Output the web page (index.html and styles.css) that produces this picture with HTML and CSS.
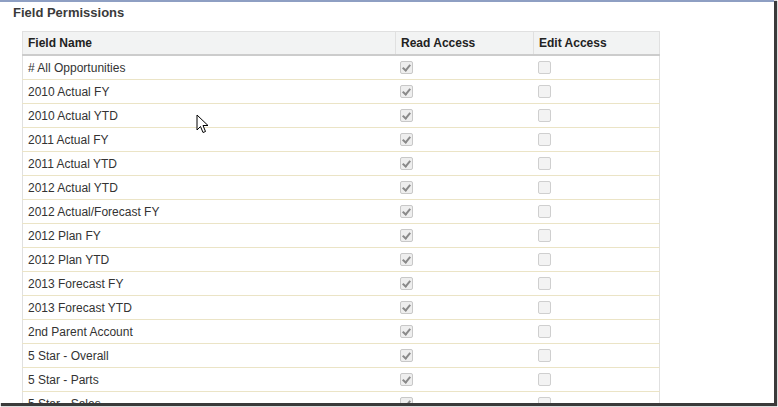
FILE: index.html
```html
<!DOCTYPE html>
<html>
<head>
<meta charset="utf-8">
<link rel="stylesheet" href="styles.css">
</head>
<body>
<div class="frame">
  <h2 class="title">Field Permissions</h2>
  <table class="perm">
    <colgroup><col class="c1"><col class="c2"><col class="c3"></colgroup>
    <thead>
      <tr><th>Field Name</th><th>Read Access</th><th>Edit Access</th></tr>
    </thead>
    <tbody>
      <tr><td># All Opportunities</td><td><span class="cb on"></span></td><td><span class="cb"></span></td></tr>
      <tr><td>2010 Actual FY</td><td><span class="cb on"></span></td><td><span class="cb"></span></td></tr>
      <tr><td>2010 Actual YTD</td><td><span class="cb on"></span></td><td><span class="cb"></span></td></tr>
      <tr><td>2011 Actual FY</td><td><span class="cb on"></span></td><td><span class="cb"></span></td></tr>
      <tr><td>2011 Actual YTD</td><td><span class="cb on"></span></td><td><span class="cb"></span></td></tr>
      <tr><td>2012 Actual YTD</td><td><span class="cb on"></span></td><td><span class="cb"></span></td></tr>
      <tr><td>2012 Actual/Forecast FY</td><td><span class="cb on"></span></td><td><span class="cb"></span></td></tr>
      <tr><td>2012 Plan FY</td><td><span class="cb on"></span></td><td><span class="cb"></span></td></tr>
      <tr><td>2012 Plan YTD</td><td><span class="cb on"></span></td><td><span class="cb"></span></td></tr>
      <tr><td>2013 Forecast FY</td><td><span class="cb on"></span></td><td><span class="cb"></span></td></tr>
      <tr><td>2013 Forecast YTD</td><td><span class="cb on"></span></td><td><span class="cb"></span></td></tr>
      <tr><td>2nd Parent Account</td><td><span class="cb on"></span></td><td><span class="cb"></span></td></tr>
      <tr><td>5 Star - Overall</td><td><span class="cb on"></span></td><td><span class="cb"></span></td></tr>
      <tr><td>5 Star - Parts</td><td><span class="cb on"></span></td><td><span class="cb"></span></td></tr>
      <tr><td>5 Star - Sales</td><td><span class="cb on"></span></td><td><span class="cb"></span></td></tr>
    </tbody>
  </table>
  <svg class="cursor" width="14" height="21" viewBox="0 0 14 21">
    <path d="M1 1 L1 16 L4.5 12.5 L7 18.5 L9.5 17.5 L7 11.5 L12 11.5 Z" fill="#fff" stroke="#000" stroke-width="1" stroke-linejoin="miter"/>
  </svg>
</div>
</body>
</html>
```

FILE: styles.css
```css
html, body {
  margin: 0;
  padding: 0;
  background: #ffffff;
}
body {
  width: 778px;
  height: 407px;
  overflow: hidden;
}
.frame {
  position: relative;
  width: 774px;
  height: 401px;
  border-top: 2px solid #8e9fc3;
  background: #ffffff;
  box-shadow: 2px 2px 1px 1px #3a3a3a;
  overflow: hidden;
  font-family: "Liberation Sans", Arial, sans-serif;
  color: #333333;
}
.title {
  margin: 0;
  padding: 3px 0 0 13px;
  height: 24px;
  box-sizing: border-box;
  font-size: 13px;
  font-weight: bold;
  line-height: 15px;
  color: #3a3a3a;
}
.perm {
  margin: 5px 0 0 22px;
  width: 637px;
  border-collapse: collapse;
  table-layout: fixed;
  border-left: 1px solid #e0e0e0;
  border-right: 1px solid #e0e0e0;
}
.c1 { width: 373px; }
.c2 { width: 138px; }
.c3 { width: 126px; }
.perm th {
  height: 22px;
  padding: 0 0 0 5px;
  text-align: left;
  font-size: 12px;
  font-weight: bold;
  color: #222222;
  background: #f2f3f3;
  border-top: 1px solid #e0e0e0;
  border-bottom: 2px solid #cccccc;
  border-left: 1px solid #e0e0e0;
}
.perm th:first-child { border-left: none; }
.perm td {
  height: 23px;
  padding: 0 0 0 5px;
  font-size: 12px;
  color: #333333;
  border-bottom: 1px solid #ebe4c6;
  vertical-align: middle;
}
.perm td + td { padding-left: 4px; }
.cb {
  display: block;
  width: 11px;
  height: 11px;
  border: 1px solid #cfcfcf;
  border-radius: 2px;
  background: #f3f3f3;
  position: relative;
}
.cb.on {
  background: #eeeeee;
  border-color: #c8c8c8;
}
.cb.on::after {
  content: "";
  position: absolute;
  left: 3px;
  top: 1px;
  width: 3px;
  height: 6px;
  border-right: 2px solid #8a8a8a;
  border-bottom: 2px solid #8a8a8a;
  transform: rotate(40deg);
}
.cursor {
  position: absolute;
  left: 196px;
  top: 112px;
}
```
